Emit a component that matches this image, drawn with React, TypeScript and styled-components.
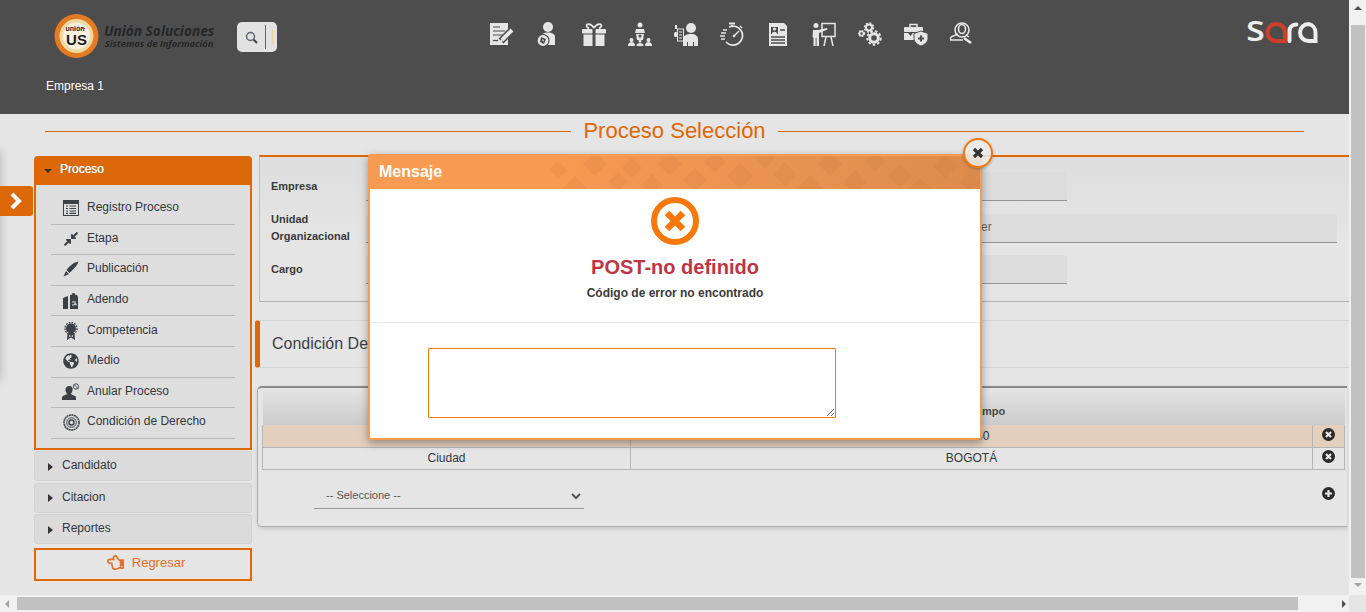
import React from 'react';
import styled, { createGlobalStyle } from 'styled-components';
import { FaCompressAlt, FaGlobeAmericas, FaRegHandPointLeft } from 'react-icons/fa';

const orange = '#dd6808';
const brightOrange = '#f5780a';
const softOrange = '#f79a52';
const headerBg = '#4d4d4d';
const iconLight = '#e6e6e6';

const GlobalStyle = createGlobalStyle`
  html, body {
    margin: 0;
    height: 100%;
    overflow: hidden;
    background: #e5e5e5;
    font-family: "Liberation Sans", Arial, sans-serif;
    color: #333;
  }
  * { box-sizing: border-box; }
`;

const Shell = styled.div`
  position: relative;
  width: 1366px;
  height: 612px;
  display: grid;
  grid-template-columns: 1349px 17px;
  grid-template-rows: 595px 17px;
  overflow: hidden;
`;

const Page = styled.div`
  display: flex;
  flex-direction: column;
  min-width: 0;
`;

/* header */
const TopBar = styled.header`
  height: 114px;
  flex: none;
  background: ${headerBg};
  padding: 14px 31px 0 46px;
  color: #fff;
`;

const TopRow = styled.div`
  height: 44px;
  display: flex;
  align-items: flex-start;
  padding-left: 8px;
`;

const Logo = styled.div`
  width: 161px;
  height: 44px;
  flex: none;
  display: flex;
  align-items: center;
  gap: 5px;
`;

const LogoText = styled.div`
  display: flex;
  flex-direction: column;
  align-items: center;
  color: #262626;
  font-family: "Open Sans", sans-serif;
  font-style: italic;
  font-weight: 700;
  line-height: 1;
  white-space: nowrap;
`;

const LogoTitle = styled.span`
  font-size: 13.7px;
`;

const LogoSubtitle = styled.span`
  font-size: 9.3px;
  margin-top: 2px;
`;

const SearchBox = styled.div`
  width: 40px;
  height: 30px;
  margin: 8px 0 0 22px;
  flex: none;
  display: flex;
  align-items: center;
  background: #e2e2e2;
  border-radius: 5px;
  color: #5c6670;
  padding-left: 8px;
`;

const SearchDivider = styled.span`
  width: 1px;
  height: 24px;
  margin-left: 7px;
  background: #666;
`;

const SearchCaret = styled.span`
  width: 1px;
  height: 14px;
  margin-left: 6px;
  background: #ecd48f;
`;

const ModuleIcons = styled.nav`
  display: flex;
  gap: 22px;
  margin: 8px 0 0 213px;
  color: ${iconLight};
`;

const SaraMark = styled.svg`
  margin: -21px 0 0 auto;
  flex: none;
`;

const Company = styled.div`
  margin-top: 21px;
  font-size: 12px;
  line-height: 14px;
`;

/* title */
const TitleBar = styled.div`
  height: 33px;
  flex: none;
  padding: 0 45px 0;
  display: flex;
  align-items: center;
  gap: 12px;
`;

const TitleRule = styled.span`
  flex: 1;
  height: 1px;
  margin-top: 2px;
  background: ${orange};
`;

const Title = styled.h1`
  margin: 0;
  font-size: 22px;
  font-weight: 400;
  line-height: 26px;
  color: ${orange};
`;

/* main */
const Main = styled.main`
  flex: 1;
  display: flex;
  gap: 7px;
  padding: 8px 0 0 34px;
  min-height: 0;
`;

const Sidebar = styled.aside`
  width: 218px;
  flex: none;
  margin-top: 1px;
  display: flex;
  flex-direction: column;
`;

const OpenHead = styled.div`
  height: 29px;
  background: ${orange};
  border-radius: 4px 4px 0 0;
  display: flex;
  align-items: center;
  padding: 0 0 3px 10px;
  gap: 8px;
  color: #fff;
  font-size: 12px;
  text-shadow: 0 0 1px #fff, 0 0 2px rgba(0, 0, 0, 0.4);
`;

const CaretDown = styled.span`
  width: 0;
  height: 0;
  margin-top: 3px;
  border-left: 4px solid transparent;
  border-right: 4px solid transparent;
  border-top: 4px solid #3a3028;
`;

const OpenBody = styled.ul`
  list-style: none;
  margin: 0;
  padding: 9px 15px 9.2px;
  background: #dedede;
  border: 2px solid ${orange};
  border-top: 0;
`;

const MenuItem = styled.li`
  height: 30.6px;
  display: flex;
  align-items: center;
  gap: 7px;
  padding: 0 0 3px 11px;
  border-bottom: 1px solid #b9b9b9;
  font-size: 12px;
  color: #34363c;
`;

const MenuIcon = styled.span`
  width: 18px;
  height: 18px;
  flex: none;
  margin-top: 2px;
  display: flex;
  align-items: center;
  justify-content: center;
  color: #3d4046;
`;

const ClosedHead = styled.div`
  height: 30px;
  margin-top: 1.5px;
  display: flex;
  align-items: center;
  gap: 9px;
  padding: 0 0 2px 13px;
  background: #dbdbdb;
  border: 1px solid #d3d3d3;
  border-radius: 3px;
  font-size: 12px;
  color: #34363c;
`;

const CaretRight = styled.span`
  width: 0;
  height: 0;
  margin-top: 3px;
  border-top: 4px solid transparent;
  border-bottom: 4px solid transparent;
  border-left: 5px solid #333;
`;

const BackButton = styled.button`
  height: 33px;
  margin-top: 3.5px;
  display: flex;
  align-items: center;
  justify-content: center;
  gap: 8px;
  padding: 0 0 3px 6px;
  background: transparent;
  border: 2px solid ${orange};
  font-family: inherit;
  font-size: 13px;
  color: #e0702a;
`;

const Content = styled.section`
  flex: 1;
  min-width: 0;
`;

const FormPanel = styled.div`
  border-top: 2px solid ${orange};
  border-left: 1px solid #bdbdbd;
  border-bottom: 1px solid #b0b0b0;
  background: linear-gradient(#dedede, #e5e5e5 60%);
  padding: 15px 0 17px 11px;
  display: grid;
  grid-template-columns: 95px 971px;
  grid-auto-rows: 29px;
  row-gap: 12.5px;
`;

const FieldLabel = styled.label`
  display: flex;
  align-items: center;
  font-size: 11px;
  font-weight: 700;
  line-height: 17px;
  color: #3a3a3a;
  margin-top: -1px;
`;

const FieldValue = styled.div<{ $narrow?: boolean }>`
  width: ${(p) => (p.$narrow ? '701px' : '100%')};
  height: 29px;
  background: #dcdcdc;
  border-bottom: 1px solid #959595;
  border-radius: 4px 4px 0 0;
  padding-left: 615px;
  font-size: 12px;
  line-height: 27px;
  color: #666;
`;

const SectionHead = styled.h2`
  margin: 18px 0 0 -4px;
  height: 48px;
  border-left: 5px solid ${orange};
  border-top: 1px solid #d6d6d6;
  border-bottom: 1px solid #d6d6d6;
  border-radius: 3px 0 0 3px;
  padding-left: 12px;
  font-size: 16px;
  font-weight: 400;
  line-height: 46px;
  color: #3c3f46;
`;

const TablePanel = styled.div`
  margin: 18px 2px 0 -2px;
  height: 141px;
  padding: 0 3px 0 4px;
  border-top: 2px solid #888;
  border-left: 1px solid #ababab;
  border-bottom: 1px solid #ababab;
  border-radius: 5px 0 0 5px;
  box-shadow: 0 2px 4px rgba(0, 0, 0, 0.12);
`;

const Grid = styled.table`
  width: 1082px;
  border-collapse: collapse;
  table-layout: fixed;
  font-size: 12px;
  color: #33363c;
`;

const HeadCell = styled.th`
  height: 37px;
  padding: 9px 0 0;
  font-size: 11px;
  text-align: center;
  color: #4a4a4a;
  background: linear-gradient(#e5e5e5, #cbcbcb);
`;

const Row = styled.tr<{ $active?: boolean }>`
  background: ${(p) => (p.$active ? '#e2cfbe' : 'transparent')};
`;

const Cell = styled.td`
  height: 22px;
  padding: 0;
  text-align: center;
  border: 1px solid #b5b5b5;
  border-top: 0;
`;

const ActionCell = styled(Cell)`
  color: #2b2b2b;
  line-height: 0;
  padding-bottom: 3px;
`;

const AddRow = styled.div`
  display: flex;
  align-items: flex-start;
  justify-content: space-between;
  margin-top: 13px;
  padding: 0 9px 0 52px;
`;

const Select = styled.select`
  width: 270px;
  height: 26px;
  padding-left: 8px;
  background: transparent;
  border: 0;
  border-bottom: 1px solid #959595;
  font-family: inherit;
  font-size: 11px;
  color: #555;
  outline: none;
`;

const AddIcon = styled.span`
  margin-top: 4px;
  color: #2b2b2b;
  line-height: 0;
`;

/* side tab */
const SideTab = styled.button`
  position: absolute;
  left: 0;
  top: 186px;
  width: 33px;
  height: 30px;
  padding: 0 0 0 9px;
  display: flex;
  align-items: center;
  background: ${orange};
  border: 0;
  border-radius: 0 3px 3px 0;
  color: #fff;
`;

const SideShadow = styled.span`
  position: absolute;
  left: -4px;
  top: 150px;
  width: 4px;
  height: 230px;
  box-shadow: 0 0 8px rgba(0, 0, 0, 0.3);
`;

/* modal */
const Modal = styled.div`
  position: absolute;
  left: 368px;
  top: 154px;
  width: 614px;
  height: 286px;
  display: flex;
  flex-direction: column;
  background: #fff;
  border: 2px solid ${softOrange};
  border-radius: 3px;
  box-shadow: 0 3px 8px rgba(0, 0, 0, 0.35);
`;

const ModalHead = styled.div`
  position: relative;
  height: 33px;
  flex: none;
  overflow: hidden;
  padding-left: 9px;
  background: linear-gradient(90deg, ${softOrange} 30%, #dc8c4e);
  font-size: 16px;
  font-weight: 700;
  line-height: 32px;
  color: #fff;
`;

const ModalPattern = styled.svg`
  position: absolute;
  left: 0;
  top: 0;
`;

const HeadLabel = styled.span`
  position: relative;
`;

const MessageTop = styled.div`
  height: 134px;
  flex: none;
  padding-top: 7px;
  display: flex;
  flex-direction: column;
  align-items: center;
  border-bottom: 1px solid #ececec;
`;

const ErrorTitle = styled.div`
  margin-top: 8px;
  font-size: 20px;
  font-weight: 700;
  line-height: 26px;
  color: #bd3547;
`;

const ErrorDetail = styled.div`
  margin-top: 6px;
  font-size: 12px;
  font-weight: 700;
  line-height: 14px;
  color: #3a3a3a;
`;

const Answer = styled.textarea`
  width: 408px;
  height: 70px;
  margin: 25px 0 0 58px;
  display: block;
  background: #fff;
  border: 1px solid ${brightOrange};
  border-radius: 1px;
  outline: none;
`;

const CloseButton = styled.button`
  position: absolute;
  right: -13px;
  top: -18px;
  width: 30px;
  height: 30px;
  padding: 0;
  display: flex;
  align-items: center;
  justify-content: center;
  background: rgba(236, 236, 236, 0.85);
  border: 2px solid ${brightOrange};
  border-radius: 50%;
  box-shadow: 0 1px 3px rgba(0, 0, 0, 0.3);
  color: #333;
`;

/* fake browser scrollbars */
const VBar = styled.div`
  background: #f1f1f1;
  display: flex;
  flex-direction: column;
  align-items: center;
`;

const VThumb = styled.div`
  width: 14px;
  height: 553px;
  margin-top: 15px;
  background: #c1c1c1;
`;

const HBar = styled.div`
  background: #f1f1f1;
  display: flex;
  align-items: center;
  padding-right: 3px;
`;

const HThumb = styled.div`
  width: 1281px;
  height: 13px;
  margin-left: 8px;
  background: #c1c1c1;
`;

const Corner = styled.div`
  background: #e5e5e5;
`;

const ArrowUp = styled.span`
  margin-top: 6px;
  border-left: 4px solid transparent;
  border-right: 4px solid transparent;
  border-bottom: 4px solid #505050;
`;

const ArrowDown = styled.span`
  margin-top: 5px;
  border-left: 4px solid transparent;
  border-right: 4px solid transparent;
  border-top: 4px solid #a3a3a3;
`;

const ArrowLeft = styled.span`
  margin-left: 5px;
  border-top: 4px solid transparent;
  border-bottom: 4px solid transparent;
  border-right: 4px solid #a3a3a3;
`;

const ArrowRight = styled.span`
  margin-left: auto;
  border-top: 4px solid transparent;
  border-bottom: 4px solid transparent;
  border-left: 4px solid #505050;
`;

/* drawings */
const Ico = ({ children }: { children: React.ReactNode }) => (
  <svg width="24" height="24" viewBox="0 0 24 24" fill="currentColor">
    {children}
  </svg>
);

const dark = headerBg;

const moduleIcons = [
  <Ico key="1">
    <rect x="0" y="1" width="18" height="22" />
    <path d="M3 5h7M3 9h12M3 13h10M3 19c2-2 3 1 5-1" stroke={dark} strokeWidth="1.2" fill="none" />
    <path d="M22 8L11 19" stroke={dark} strokeWidth="7" />
    <path d="M22 8L12 18" stroke="currentColor" strokeWidth="4" />
    <path d="M10 21l1-4 2 2z" />
  </Ico>,
  <Ico key="2">
    <circle cx="12" cy="5" r="5" />
    <path d="M5 20v-5c0-3 3-4.500 7-4.500s7 1.500 7 4.500v8H8z" />
    <circle cx="7" cy="18.500" r="6" stroke={dark} strokeWidth="1.200" />
    <path d="M5 15l5 2-2 5-4-2z" fill={dark} />
    <path d="M6 17l2 1-1 2z" />
  </Ico>,
  <Ico key="3">
    <rect x="0" y="7" width="10.500" height="4.500" rx="1" />
    <rect x="13.500" y="7" width="10.500" height="4.500" rx="1" />
    <rect x="1.500" y="12.500" width="9" height="11.500" />
    <rect x="13.500" y="12.500" width="9" height="11.500" />
    <path d="M12 6C9 1 3 1 5 5l2 1.500M12 6c3-5 9-5 7-1l-2 1.500" fill="none" stroke="currentColor" strokeWidth="1.700" />
  </Ico>,
  <Ico key="4">
    <circle cx="12" cy="3" r="2.500" />
    <path d="M8 7h8l1 4H7z" />
    <path d="M8 12h8l-1 6H9z" />
    <circle cx="12" cy="14" r="1.500" fill={dark} />
    <circle cx="3.500" cy="18" r="2" />
    <circle cx="12" cy="19" r="1.500" />
    <circle cx="20.500" cy="18" r="2" />
    <path d="M0 24c0-3 1.500-4 3.500-4S7 21 7 24zM8.500 24c0-2 1.500-3 3.500-3s3.500 1 3.500 3zM17 24c0-3 1.500-4 3.500-4s3.500 1 3.500 4z" />
  </Ico>,
  <Ico key="5">
    <circle cx="17" cy="6" r="5" />
    <path d="M9 24v-7c0-3 3.500-5 8-5s7 2 7 5v7h-4v-4h-1v4h-5v-4h-1v4z" />
    <rect x="3.500" y="7" width="6" height="12" fill="none" stroke="currentColor" strokeWidth="1" />
    <path d="M5 10h3M5 13h3M5 16h3" stroke="currentColor" strokeWidth="1" />
    <rect x="0" y="10" width="3.500" height="5" rx="1.500" />
    <path d="M1 3h2v4H1z" />
  </Ico>,
  <Ico key="6">
    <path d="M9 5a9.500 9.500 0 1 1-3 15" fill="none" stroke="currentColor" strokeWidth="1.700" />
    <rect x="9" y="0.500" width="6" height="2" />
    <path d="M12 3v2M20 4l2 2" stroke="currentColor" strokeWidth="1.500" />
    <path d="M14 14l5-5" stroke="currentColor" strokeWidth="1.500" />
    <circle cx="14" cy="14" r="1.300" />
    <path d="M3 8h4M1 11h5M0 14h5M1 17h4" stroke="currentColor" strokeWidth="1.300" />
  </Ico>,
  <Ico key="7">
    <path d="M3 1h15l3 3v20H3z" />
    <rect x="5" y="5" width="7" height="7" fill={dark} />
    <circle cx="8.500" cy="7" r="1.500" />
    <path d="M6 12c0-3 5-3 5 0z" />
    <path d="M14 8h5M5 15h14M5 18h14M5 21h14" stroke={dark} strokeWidth="1.300" />
  </Ico>,
  <Ico key="8">
    <rect x="10" y="1.500" width="13" height="13" fill="none" stroke="currentColor" strokeWidth="1.500" />
    <path d="M14 15l-2 9M19 15l2 9" stroke="currentColor" strokeWidth="1.500" />
    <circle cx="4" cy="3.500" r="2.500" />
    <path d="M1 8h5l9-2 .5 1.500L7 11v13H4.500v-8h-.8v8H1.500v-8L.500 15z" />
  </Ico>,
  <Ico key="9">
    <g fill="none" stroke="currentColor">
      <circle cx="11" cy="5.500" r="3" strokeWidth="2" />
      <circle cx="11" cy="5.500" r="4.500" strokeWidth="1.500" strokeDasharray="2 1.500" />
      <circle cx="3.500" cy="11.500" r="2" strokeWidth="1.500" />
      <circle cx="3.500" cy="11.500" r="3" strokeWidth="1.200" strokeDasharray="1.600 1.200" />
      <circle cx="16" cy="16" r="4.300" strokeWidth="3" />
      <circle cx="16" cy="16" r="6.700" strokeWidth="2" strokeDasharray="2.600 2" />
    </g>
  </Ico>,
  <Ico key="10">
    <path d="M6 5V2.500h7V5" fill="none" stroke="currentColor" strokeWidth="1.500" />
    <rect x="0" y="5" width="19" height="5" rx="1" />
    <path d="M0 11h10v7H0z" />
    <path d="M6 10.500c1-1.500 3-.5 2.500 1L6.500 14l-2-2.500c-.5-1.500 .5-2.500 1.500-1z" fill={dark} />
    <path d="M17 9l7 2.500v5c0 3.500-3 6-7 7.500-4-1.500-7-4-7-7.500v-5z" stroke={dark} strokeWidth="1" />
    <path d="M17 13.500v6M14 16.500h6" stroke={dark} strokeWidth="2" />
  </Ico>,
  <Ico key="11">
    <circle cx="12" cy="8" r="7" fill="none" stroke="currentColor" strokeWidth="1.600" />
    <ellipse cx="12" cy="7" rx="3.500" ry="4.500" fill="none" stroke="currentColor" strokeWidth="1.600" />
    <path d="M8 12l-7 3-1 3h8M16 13l3 2M3 18h10" fill="none" stroke="currentColor" strokeWidth="1.400" />
    <path d="M14 16l7 5" stroke="currentColor" strokeWidth="2.600" />
  </Ico>,
];

const LogoEmblem = () => (
  <svg width="45" height="44" viewBox="0 0 45 44">
    <circle cx="22.500" cy="22" r="22" fill="#e27b22" />
    <circle cx="22.500" cy="22" r="17" fill="#efd9a0" />
    <circle cx="22.500" cy="22" r="13.500" fill="#f7f1dd" />
    <text x="21" y="17" textAnchor="middle" fontSize="7" fontWeight="700" fontFamily="Liberation Sans" fill="#222">
      unión
    </text>
    <path d="M28 14.500h3" stroke="#c8352a" strokeWidth="1" />
    <text x="22.500" y="31" textAnchor="middle" fontSize="15" fontWeight="700" fontFamily="Liberation Sans" fill="#1d1d1d">
      US
    </text>
  </svg>
);

const MagnifierIcon = () => (
  <svg width="13" height="13" viewBox="0 0 13 13" fill="none" stroke="currentColor">
    <circle cx="5.500" cy="5.500" r="4" strokeWidth="1.500" />
    <path d="M8.500 8.500l3.500 3.500" strokeWidth="2" stroke="#444" />
  </svg>
);

// the svg is taller than the mark so the text box of the big "s" fits inside it
const SaraLogo = () => (
  <SaraMark width="72" height="60" viewBox="0 -28 72 60" aria-label="sara">
    <text x="0" y="20" fontSize="37" fontWeight="500" fontFamily="Noto Sans" fill="#ededed" textLength="19" lengthAdjust="spacingAndGlyphs">
      s
    </text>
    <path d="M30 3a8.500 8.500 0 1 0 0 17h9v-8.500A8.500 8.500 0 0 0 30 3z" fill="none" stroke="#cf3d2c" strokeWidth="4" />
    <path d="M43.500 20V10c0-4 3-6.500 7-6.500" fill="none" stroke="#ededed" strokeWidth="4" strokeLinecap="round" />
    <path d="M62.500 3a8.500 8.500 0 1 0 0 17h7v-8.500A8.500 8.500 0 0 0 62.500 3z" fill="none" stroke="#ededed" strokeWidth="4" />
  </SaraMark>
);

const ListWindowIcon = () => (
  <svg width="16" height="16" viewBox="0 0 16 16" fill="none" stroke="currentColor">
    <rect x="0.500" y="0.500" width="15" height="15" />
    <rect x="0.500" y="0.500" width="15" height="3" fill="currentColor" />
    <path d="M3 6h2M6.500 6H13M3 8.500h2M6.500 8.500H13M3 11h2M6.500 11H13M3 13.300h2M6.500 13.300H13" strokeWidth="1.200" />
  </svg>
);

const PenIcon = () => (
  <svg width="16" height="16" viewBox="0 0 16 16" fill="currentColor">
    <path d="M15.500 .5c-3.500 .5-6.500 2.500-9.500 5.500L3.500 9l3 3 2.800-2.800C12 6.500 14.500 4 15.500 .5z" />
    <path d="M3 10l-2.500 5.500L6 13z" />
  </svg>
);

const ClipboardIcon = () => (
  <svg width="17" height="17" viewBox="0 0 17 17" fill="currentColor">
    <path d="M7 3h1.500a2 2 0 0 1 4 0H14l1 2v12H7z" />
    <path d="M0 6l5-2v13H0z" />
    <path d="M9 10h4M9 13h2l1-1.500L13.500 13" stroke="#dedede" strokeWidth="1.200" fill="none" />
  </svg>
);

const SealIcon = () => (
  <svg width="14" height="18" viewBox="0 0 14 18" fill="currentColor">
    <path d="M3.500 11l-.5 7 4-2.500 4 2.500-.5-7zM5 13l2 1 2-1v2l-2-1-2 1z" />
    <circle cx="7" cy="6.500" r="5" />
    <circle cx="7" cy="6.500" r="6" fill="none" stroke="currentColor" strokeWidth="1.400" strokeDasharray="1.600 1.200" />
  </svg>
);

const UserBanIcon = () => (
  <svg width="18" height="18" viewBox="0 0 18 18" fill="currentColor">
    <path d="M7.500 3c2.500 0 3.500 2 3 4.500-.3 1.500-1 2.500-1.500 3.300 0 1 3.500 1.500 5 3.200V17H0v-3c1.500-1.700 5-2.200 5-3.200-.5-.8-1.200-1.800-1.500-3.300C3 5 5 3 7.500 3z" />
    <circle cx="14" cy="3.500" r="2.700" fill="none" stroke="currentColor" strokeWidth=".9" />
    <path d="M12.200 1.700l3.600 3.600" stroke="currentColor" strokeWidth=".9" />
  </svg>
);

const TargetIcon = () => (
  <svg width="17" height="17" viewBox="0 0 17 17" fill="none" stroke="currentColor">
    <circle cx="8.500" cy="8.500" r="7.500" strokeWidth="1.600" strokeDasharray="2 .5" />
    <circle cx="8.500" cy="8.500" r="4.800" strokeWidth="1" />
    <circle cx="8.500" cy="8.500" r="2.500" strokeWidth="1.400" />
  </svg>
);

const CircleMark = ({ plus }: { plus?: boolean }) => (
  <svg width="13" height="13" viewBox="0 0 13 13">
    <circle cx="6.500" cy="6.500" r="6.500" fill="currentColor" />
    <path
      d={plus ? 'M6.500 3v7M3 6.500h7' : 'M4 4l5 5M9 4l-5 5'}
      stroke="#e8e8e8"
      strokeWidth="2.200"
    />
  </svg>
);

const ErrorBadge = () => (
  <svg width="50" height="50" viewBox="0 0 50 50">
    <circle cx="25" cy="25" r="21" fill="#fff" stroke={brightOrange} strokeWidth="6" />
    <path d="M17 17l16 16M33 17L17 33" stroke={brightOrange} strokeWidth="6.500" />
  </svg>
);

const diamonds = [
  [188, 14, 9], [205, 32, 12], [225, 8, 12], [248, 26, 10], [262, 12, 10], [282, 30, 12], [300, 8, 12],
  [325, 24, 12], [345, 6, 11], [370, 20, 13], [395, 2, 10], [415, 18, 12], [440, 32, 13], [460, 8, 12],
  [485, 26, 12], [505, 6, 10], [530, 20, 12], [550, 32, 10], [575, 10, 12], [600, 26, 10],
];

const menu: [string, React.ReactNode][] = [
  ['Registro Proceso', <ListWindowIcon />],
  ['Etapa', <FaCompressAlt size={16} />],
  ['Publicación', <PenIcon />],
  ['Adendo', <ClipboardIcon />],
  ['Competencia', <SealIcon />],
  ['Medio', <FaGlobeAmericas size={16} />],
  ['Anular Proceso', <UserBanIcon />],
  ['Condición de Derecho', <TargetIcon />],
];

const App = () => {
  return (
    <>
      <GlobalStyle />
      <Shell>
        <Page>
          <TopBar>
            <TopRow>
              <Logo>
                <LogoEmblem />
                <LogoText>
                  <LogoTitle>Unión Soluciones</LogoTitle>
                  <LogoSubtitle>Sistemas de Información</LogoSubtitle>
                </LogoText>
              </Logo>
              <SearchBox>
                <MagnifierIcon />
                <SearchDivider />
                <SearchCaret />
              </SearchBox>
              <ModuleIcons>{moduleIcons}</ModuleIcons>
              <SaraLogo />
            </TopRow>
            <Company>Empresa 1</Company>
          </TopBar>

          <TitleBar>
            <TitleRule />
            <Title>Proceso Selección</Title>
            <TitleRule />
          </TitleBar>

          <Main>
            <Sidebar>
              <OpenHead>
                <CaretDown />
                Proceso
              </OpenHead>
              <OpenBody>
                {menu.map(([label, icon]) => (
                  <MenuItem key={label}>
                    <MenuIcon>{icon}</MenuIcon>
                    {label}
                  </MenuItem>
                ))}
              </OpenBody>
              {['Candidato', 'Citacion', 'Reportes'].map((label) => (
                <ClosedHead key={label}>
                  <CaretRight />
                  {label}
                </ClosedHead>
              ))}
              <BackButton>
                <FaRegHandPointLeft size={17} />
                Regresar
              </BackButton>
            </Sidebar>

            <Content>
              <FormPanel>
                <FieldLabel>Empresa</FieldLabel>
                <FieldValue $narrow />
                <FieldLabel>Unidad Organizacional</FieldLabel>
                <FieldValue>er</FieldValue>
                <FieldLabel>Cargo</FieldLabel>
                <FieldValue $narrow />
              </FormPanel>

              <SectionHead>Condición De Derecho</SectionHead>

              <TablePanel>
                <Grid>
                  <colgroup>
                    <col style={{ width: 368 }} />
                    <col style={{ width: 682 }} />
                    <col style={{ width: 32 }} />
                  </colgroup>
                  <thead>
                    <tr>
                      <HeadCell>Campo</HeadCell>
                      <HeadCell>Valor Campo</HeadCell>
                      <HeadCell />
                    </tr>
                  </thead>
                  <tbody>
                    <Row $active>
                      <Cell>Salario</Cell>
                      <Cell>11.050</Cell>
                      <ActionCell>
                        <CircleMark />
                      </ActionCell>
                    </Row>
                    <Row>
                      <Cell>Ciudad</Cell>
                      <Cell>BOGOTÁ</Cell>
                      <ActionCell>
                        <CircleMark />
                      </ActionCell>
                    </Row>
                  </tbody>
                </Grid>
                <AddRow>
                  <Select defaultValue="">
                    <option value="">-- Seleccione --</option>
                  </Select>
                  <AddIcon>
                    <CircleMark plus />
                  </AddIcon>
                </AddRow>
              </TablePanel>
            </Content>
          </Main>
        </Page>

        <VBar>
          <ArrowUp />
          <VThumb />
          <ArrowDown />
        </VBar>
        <HBar>
          <ArrowLeft />
          <HThumb />
          <ArrowRight />
        </HBar>
        <Corner />

        <SideShadow />
        <SideTab aria-label="Abrir menú">
          <svg width="14" height="18" viewBox="0 0 14 18" fill="none" stroke="#fff" strokeWidth="4">
            <path d="M3 2l7 7-7 7" />
          </svg>
        </SideTab>

        <Modal>
          <ModalHead>
            <ModalPattern width="610" height="33" viewBox="0 0 610 33">
              {diamonds.map(([x, y, r]) => (
                <path
                  key={`${x}-${y}`}
                  d={`M${x} ${y - r}l${r} ${r}-${r} ${r}-${r}-${r}z`}
                  fill="#c9783a"
                  fillOpacity="0.16"
                />
              ))}
            </ModalPattern>
            <HeadLabel>Mensaje</HeadLabel>
          </ModalHead>
          <MessageTop>
            <ErrorBadge />
            <ErrorTitle>POST-no definido</ErrorTitle>
            <ErrorDetail>Código de error no encontrado</ErrorDetail>
          </MessageTop>
          <Answer />
          <CloseButton aria-label="Cerrar">
            <svg width="12" height="12" viewBox="0 0 12 12" stroke="currentColor" strokeWidth="3.200">
              <path d="M2 2l8 8M10 2l-8 8" />
            </svg>
          </CloseButton>
        </Modal>
      </Shell>
    </>
  );
};

export default App;
